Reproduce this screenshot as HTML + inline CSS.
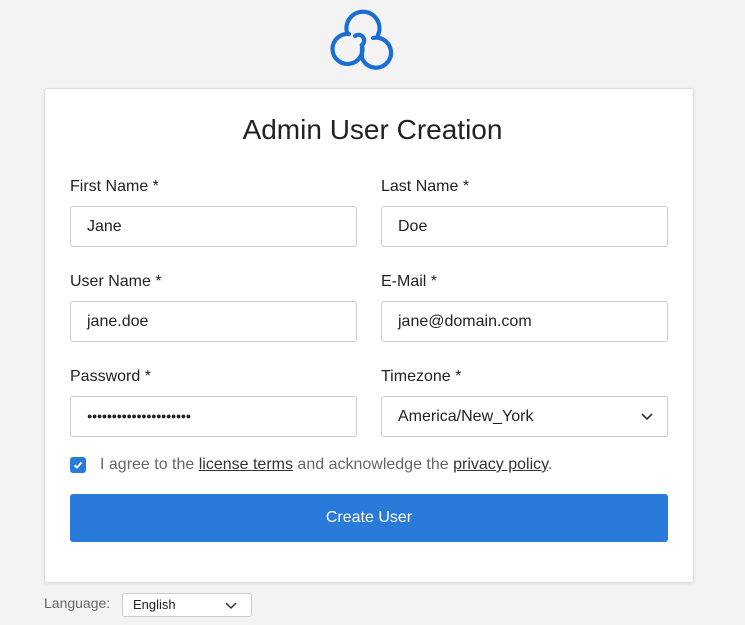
<!DOCTYPE html>
<html><head><style>
body{margin:0;background:#f3f3f3;font-family:"Liberation Sans",sans-serif;width:745px;height:625px;position:relative;overflow:hidden;color:#222}
.card{position:absolute;left:44px;top:88px;width:648px;height:493px;background:#fff;border:1px solid #ddd;border-radius:3px;box-shadow:0 1px 3px rgba(0,0,0,.08)}
h1{position:absolute;left:0;right:0;top:114px;margin:0;text-align:center;font-weight:normal;font-size:28px;color:#222}
.lbl{position:absolute;font-size:16px;color:#222}
.in{position:absolute;width:287px;height:41px;border:1px solid #ccc;border-radius:3px;box-sizing:border-box;padding-left:16px;line-height:39px;font-size:16px;background:#fff}
.btn{position:absolute;left:70px;top:494px;width:598px;height:48px;background:#2a7ad9;border-radius:3px;color:#fff;text-align:center;line-height:48px;font-size:16px}
</style></head><body>
<svg style="position:absolute;left:325px;top:5px" width="76" height="66" viewBox="325 5 76 66">
<g fill="none" stroke="#1a6fd3" stroke-width="4.2" stroke-linecap="round">
<path d="M347.5 34 A16.5 16.5 0 1 1 378 35"/>
<path d="M349 34 A15 15 0 1 0 362 45 A5 5 0 0 0 355 36"/>
<path d="M362 58 A15 15 0 1 0 373 38"/>
<path d="M362 45 L362 57"/>
</g></svg>
<div class="card"></div>
<h1>Admin User Creation</h1>
<div class="lbl" style="left:70px;top:178px">First Name *</div>
<div class="lbl" style="left:381px;top:178px">Last Name *</div>
<div class="in" style="left:70px;top:206px">Jane</div>
<div class="in" style="left:381px;top:206px">Doe</div>
<div class="lbl" style="left:70px;top:273px">User Name *</div>
<div class="lbl" style="left:381px;top:273px">E-Mail *</div>
<div class="in" style="left:70px;top:301px">jane.doe</div>
<div class="in" style="left:381px;top:301px">jane@domain.com</div>
<div class="lbl" style="left:70px;top:368px">Password *</div>
<div class="lbl" style="left:381px;top:368px">Timezone *</div>
<div class="in" style="left:70px;top:396px;font-size:9px;letter-spacing:-0.5px">●●●●●●●●●●●●●●●●●●●●●</div>
<div class="in" style="left:381px;top:396px">America/New_York
<svg style="position:absolute;right:14px;top:16px" width="12" height="8"><path d="M1 1L6 6L11 1" fill="none" stroke="#333" stroke-width="1.6"/></svg></div>
<div style="position:absolute;left:70px;top:457px;width:16px;height:16px;background:#2a7ad9;border-radius:3px"><svg width="16" height="16"><path d="M4.5 8.3L7 10.5L11.5 5.5" fill="none" stroke="#fff" stroke-width="2"/></svg></div>
<div class="lbl" style="left:100px;top:456px;color:#666">I agree to the <u style="color:#333">license terms</u> and acknowledge the <u style="color:#333">privacy policy</u>.</div>
<div class="btn">Create User</div>
<div class="lbl" style="left:44px;top:595px;font-size:14px;color:#666">Language:</div>
<div style="position:absolute;left:122px;top:593px;width:130px;height:24px;border:1px solid #ccc;border-radius:3px;box-sizing:border-box;background:#fff;font-size:13px;line-height:22px;padding-left:10px">English
<svg style="position:absolute;right:14px;top:8px" width="12" height="8"><path d="M1 1L6 6L11 1" fill="none" stroke="#333" stroke-width="1.5"/></svg></div>
</body></html>
